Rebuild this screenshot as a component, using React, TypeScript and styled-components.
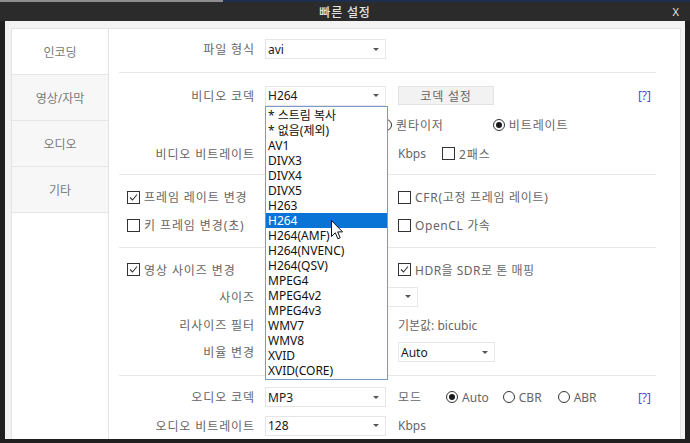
import React from "react";
import styled, { createGlobalStyle } from "styled-components";

const GlobalStyle = createGlobalStyle`
  * { box-sizing: border-box; }
  html, body { margin: 0; padding: 0; background: #1f1f1f; }
  body {
    font-family: "Noto Sans", "Noto Sans CJK KR", sans-serif;
    font-size: 12px;
  }
`;

const Window = styled.div`
  width: 690px;
  height: 443px;
  display: flex;
  flex-direction: column;
  background: #202020;
  overflow: hidden;
`;

const TopEdge = styled.div`
  height: 2px;
  background: linear-gradient(to right, #8e8e8e 0 223px, #1d2f4d 223px);
`;

const TitleBar = styled.div`
  height: 19px;
  display: grid;
  grid-template-columns: 1fr auto 1fr;
  align-items: center;
  color: #e4e4e4;
  background: #2b2b2b;
`;

const Title = styled.div`
  grid-column: 2;
  font-size: 12px;
  font-weight: 500;
  letter-spacing: 0.8px;
`;

const CloseBtn = styled.div`
  justify-self: end;
  padding-right: 11px;
  font-size: 11px;
`;

const Frame = styled.div`
  flex: 1;
  margin: 0 5px 4px 5px;
  padding: 7px 4px 0 6px;
  background: #f3f3f3;
  display: flex;
  min-height: 0;
`;

const Panel = styled.div`
  flex: 1;
  display: flex;
  background: #fff;
  border: 1px solid #e3e3e3;
  border-bottom: none;
  overflow: hidden;
`;

const Sidebar = styled.div`
  width: 97px;
  border-right: 1px solid #e3e3e3;
  display: flex;
  flex-direction: column;
`;

const Tab = styled.div<{ $active?: boolean }>`
  height: 46px;
  display: flex;
  align-items: center;
  justify-content: center;
  color: #7a7a7a;
  background: ${(p) => (p.$active ? "#fff" : "#f7f7f7")};
  border-bottom: 1px solid #e6e6e6;
`;

const Content = styled.div`
  flex: 1;
  padding: 0 24px 0 10px;
  color: #666;
`;

const Section = styled.div<{ $pt: number; $pb: number; $last?: boolean }>`
  padding: ${(p) => p.$pt}px 0 ${(p) => p.$pb}px;
  border-bottom: ${(p) => (p.$last ? "none" : "1px solid #e8e8e8")};
`;

const Row = styled.div<{ $h: number }>`
  height: ${(p) => p.$h}px;
  display: grid;
  grid-template-columns: 146px 133px 1fr;
  align-items: center;
`;

const Label = styled.div`
  text-align: right;
  padding-right: 10px;
  color: #666;
  letter-spacing: 0.9px;
  white-space: nowrap;
`;

const Select = styled.div<{ $w: number; $span?: boolean }>`
  position: relative;
  width: ${(p) => p.$w}px;
  height: 20px;
  grid-column: ${(p) => (p.$span ? "2 / span 2" : "auto")};
  border: 1px solid #e6e6e6;
  background: #fff;
  display: flex;
  align-items: center;
  padding-left: 2px;
  color: #1a1a1a;
`;

const Caret = styled.span`
  margin-left: auto;
  margin-right: 6px;
  width: 0;
  height: 0;
  border-left: 3px solid transparent;
  border-right: 3px solid transparent;
  border-top: 3px solid #555;
`;

const Right = styled.div<{ $gap?: number; $shift?: number }>`
  grid-column: 3;
  display: flex;
  align-items: center;
  gap: ${(p) => p.$gap ?? 0}px;
  margin-left: ${(p) => p.$shift ?? 0}px;
  white-space: nowrap;
`;

const Wide = styled.div`
  grid-column: 1 / span 2;
  padding-left: 8px;
  display: flex;
  align-items: center;
`;

const Button = styled.div`
  width: 96px;
  height: 19px;
  display: flex;
  align-items: center;
  justify-content: center;
  background: #f2f2f2;
  border: 1px solid #e3e3e3;
  color: #666;
  letter-spacing: 0.8px;
`;

const Help = styled.span`
  margin-left: auto;
  margin-right: 5px;
  color: #4b4bd6;
`;

const Unit = styled.span<{ $ls?: number }>`
  color: #666;
  letter-spacing: ${(p) => p.$ls ?? 0}px;
`;

const OptionItem = styled.label<{ $ls: number }>`
  display: inline-flex;
  align-items: center;
  gap: 4px;
  color: #666;
  letter-spacing: ${(p) => p.$ls}px;
`;

const Box = styled.span`
  width: 13px;
  height: 13px;
  border: 1px solid #333;
  background: #fff;
  display: inline-flex;
  align-items: center;
  justify-content: center;
`;

const Ring = styled.span`
  width: 12px;
  height: 12px;
  border-radius: 50%;
  border: 1px solid #333;
  background: #fff;
  display: inline-flex;
  align-items: center;
  justify-content: center;
`;

const Dot = styled.span`
  width: 6px;
  height: 6px;
  border-radius: 50%;
  background: #1a1a1a;
`;

const Spacer = styled.span<{ $w: number }>`
  width: ${(p) => p.$w}px;
`;

const List = styled.div`
  position: absolute;
  left: -1px;
  top: 19px;
  width: 123px;
  padding: 1px 0;
  background: #fff;
  border: 1px solid #7a9cc4;
  z-index: 5;
`;

const Item = styled.div<{ $sel?: boolean }>`
  height: 15px;
  line-height: 15px;
  padding-left: 2px;
  white-space: nowrap;
  color: ${(p) => (p.$sel ? "#fff" : "#111")};
  background: ${(p) => (p.$sel ? "#0a74d6" : "transparent")};
`;

const Pointer = styled.svg`
  position: absolute;
  left: 65px;
  top: 113px;
`;

type OptProps = { on?: boolean; ls?: number; children: React.ReactNode };

const Check = ({ on, ls = 0.9, children }: OptProps) => (
  <OptionItem $ls={ls}>
    <Box>
      {on && (
        <svg width="11" height="11" viewBox="0 0 11 11">
          <polyline points="2,5.5 4.5,8 9,2.5" fill="none" stroke="#333" strokeWidth="1.1" />
        </svg>
      )}
    </Box>
    {children}
  </OptionItem>
);

const Radio = ({ on, ls = 0.9, children }: OptProps) => (
  <OptionItem $ls={ls}>
    <Ring>{on && <Dot />}</Ring>
    {children}
  </OptionItem>
);

const codecs = [
  "* 스트림 복사",
  "* 없음(제외)",
  "AV1",
  "DIVX3",
  "DIVX4",
  "DIVX5",
  "H263",
  "H264",
  "H264(AMF)",
  "H264(NVENC)",
  "H264(QSV)",
  "MPEG4",
  "MPEG4v2",
  "MPEG4v3",
  "WMV7",
  "WMV8",
  "XVID",
  "XVID(CORE)",
];

export default function App() {
  return (
    <>
      <GlobalStyle />
      <Window>
        <TopEdge />
        <TitleBar>
          <Title>빠른 설정</Title>
          <CloseBtn>X</CloseBtn>
        </TitleBar>
        <Frame>
          <Panel>
            <Sidebar>
              <Tab $active>인코딩</Tab>
              <Tab>영상/자막</Tab>
              <Tab>오디오</Tab>
              <Tab>기타</Tab>
            </Sidebar>
            <Content>
              <Section $pt={6} $pb={9}>
                <Row $h={28}>
                  <Label>파일 형식</Label>
                  <Select $w={121}>
                    avi
                    <Caret />
                  </Select>
                </Row>
              </Section>

              <Section $pt={8} $pb={6}>
                <Row $h={29}>
                  <Label>비디오 코덱</Label>
                  <Select $w={121}>
                    H264
                    <Caret />
                    <List>
                      {codecs.map((c) => (
                        <Item key={c} $sel={c === "H264"}>
                          {c}
                        </Item>
                      ))}
                      <Pointer width="13" height="20" viewBox="0 0 13 20">
                        <path
                          d="M0.5 0.5 V16.5 L4.3 12.8 L6.9 18.8 L9.2 17.8 L6.7 11.9 H11.6 Z"
                          fill="#fff"
                          stroke="#111"
                          strokeWidth="1"
                          strokeLinejoin="round"
                        />
                      </Pointer>
                    </List>
                  </Select>
                  <Right>
                    <Button>코덱 설정</Button>
                    <Help>[?]</Help>
                  </Right>
                </Row>
                <Row $h={29}>
                  <div />
                  <div />
                  <Right $gap={49} $shift={-18}>
                    <Radio>퀀타이저</Radio>
                    <Radio on>비트레이트</Radio>
                  </Right>
                </Row>
                <Row $h={29}>
                  <Label>비디오 비트레이트</Label>
                  <Select $w={121} />
                  <Right $gap={16}>
                    <Unit>Kbps</Unit>
                    <Check>2패스</Check>
                  </Right>
                </Row>
              </Section>

              <Section $pt={8} $pb={8}>
                <Row $h={28}>
                  <Wide>
                    <Check on>프레임 레이트 변경</Check>
                  </Wide>
                  <Right>
                    <Check ls={0.7}>CFR(고정 프레임 레이트)</Check>
                  </Right>
                </Row>
                <Row $h={28}>
                  <Wide>
                    <Check>키 프레임 변경(초)</Check>
                  </Wide>
                  <Right>
                    <Check ls={0.6}>OpenCL 가속</Check>
                  </Right>
                </Row>
              </Section>

              <Section $pt={8} $pb={10}>
                <Row $h={27}>
                  <Wide>
                    <Check on>영상 사이즈 변경</Check>
                  </Wide>
                  <Right>
                    <Check on ls={0.5}>
                      HDR을 SDR로 톤 매핑
                    </Check>
                  </Right>
                </Row>
                <Row $h={27}>
                  <Label>사이즈</Label>
                  <Select $w={153} $span>
                    <Caret />
                  </Select>
                </Row>
                <Row $h={29}>
                  <Label>리사이즈 필터</Label>
                  <Select $w={121} />
                  <Right>
                    <Unit>기본값: bicubic</Unit>
                  </Right>
                </Row>
                <Row $h={26}>
                  <Label>비율 변경</Label>
                  <Select $w={121} />
                  <Right>
                    <Select $w={97}>
                      Auto
                      <Caret />
                    </Select>
                  </Right>
                </Row>
              </Section>

              <Section $pt={7} $pb={0} $last>
                <Row $h={28}>
                  <Label>오디오 코덱</Label>
                  <Select $w={121}>
                    MP3
                    <Caret />
                  </Select>
                  <Right>
                    <Unit $ls={1}>모드</Unit>
                    <Spacer $w={24} />
                    <Radio on ls={0}>
                      Auto
                    </Radio>
                    <Spacer $w={14} />
                    <Radio ls={0}>CBR</Radio>
                    <Spacer $w={16} />
                    <Radio ls={0}>ABR</Radio>
                    <Help>[?]</Help>
                  </Right>
                </Row>
                <Row $h={29}>
                  <Label>오디오 비트레이트</Label>
                  <Select $w={121}>
                    128
                    <Caret />
                  </Select>
                  <Right>
                    <Unit>Kbps</Unit>
                  </Right>
                </Row>
              </Section>
            </Content>
          </Panel>
        </Frame>
      </Window>
    </>
  );
}
